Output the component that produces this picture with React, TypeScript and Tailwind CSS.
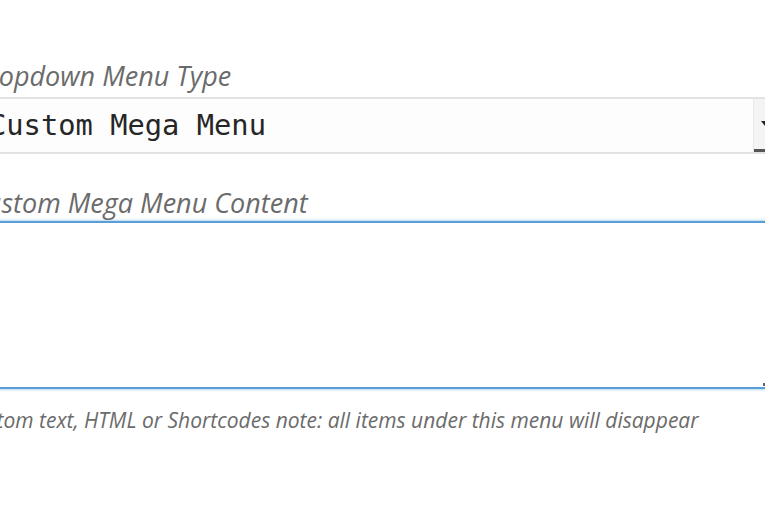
import React from "react";

export default function App() {
  return (
    <div className="w-[765px] h-[510px] bg-white overflow-hidden relative">
      <div className="ml-[-30px] w-[802px] pt-[59px] flex flex-col">
        <div
          className="text-[27px] leading-[34px] italic text-[#6b6b6b] whitespace-nowrap"
          style={{ fontFamily: '"Open Sans", sans-serif' }}
        >
          Dropdown Menu Type
        </div>
        <div className="mt-[4px] h-[57px] border-t-2 border-b-2 border-[#e2e2e2] bg-[#fdfdfd] flex items-center relative">
          <span
            className="pl-[19px] text-[28.75px] text-[#262626] whitespace-nowrap"
            style={{ fontFamily: '"DejaVu Sans Mono", monospace' }}
          >
            Custom Mega Menu
          </span>
          <div className="absolute right-0 top-0 bottom-0 w-[19px] border-l border-[#e8e8e8] bg-[#f4f4f4]">
            <div className="absolute left-[7px] top-[22px] w-0 h-0 border-l-[4px] border-r-[4px] border-t-[5px] border-l-transparent border-r-transparent border-t-[#222]"></div>
            <div className="absolute left-0 bottom-0 w-[19px] h-[3px] bg-[#555]"></div>
          </div>
        </div>
        <div
          className="mt-[32px] text-[27px] leading-[34px] italic text-[#6b6b6b] whitespace-nowrap"
          style={{ fontFamily: '"Open Sans", sans-serif' }}
        >
          Custom Mega Menu Content
        </div>
        <div className="mt-[1px] h-[168px] border-t-2 border-b-2 border-[#5b9dd9] shadow-[0_0_3px_rgba(30,140,190,0.6)] bg-white relative">
          <div className="absolute right-[6px] bottom-[1px] w-[3px] h-[3px] bg-[#666]"></div>
        </div>
        <div
          className="mt-[17px] ml-[-7px] text-[21px] leading-[28px] italic text-[#6b6b6b] whitespace-nowrap"
          style={{ fontFamily: '"Open Sans", sans-serif' }}
        >
          Custom text, HTML or Shortcodes note: all items under this menu will disappear
        </div>
      </div>
    </div>
  );
}
